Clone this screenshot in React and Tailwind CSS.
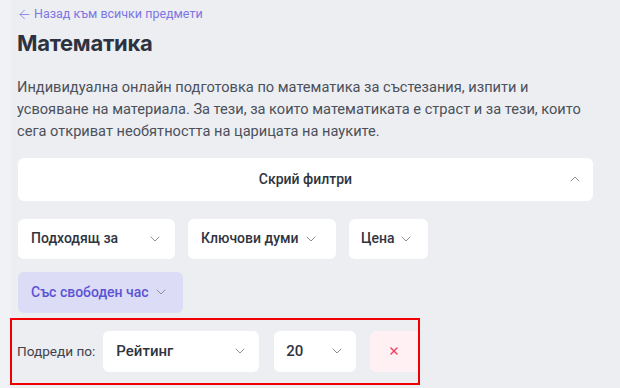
import { ChevronDown, ChevronUp, ArrowLeft, X } from 'lucide-react';

const FilterButton = ({ label, className = '' }) => (
  <button className={`flex items-center h-10 rounded-md bg-white text-[14px] font-medium text-[#2f3440] ${className}`}>
    {label}
  </button>
);

const App = () => {
  return (
    <div className="w-[620px] h-[388px] overflow-hidden flex bg-[#eceef2] font-['Roboto',sans-serif]">
      <div className="w-[11px] shrink-0 bg-[#f1f2f5]" />
      <div className="flex-1 pl-[6px] pr-[27px]">
        <a className="flex items-center gap-[2px] pt-[5px] text-[12.5px] text-[#7d76e3]">
          <ArrowLeft size={15} strokeWidth={1.3} />
          Назад към всички предмети
        </a>
        <h1 className="mt-[4px] text-[22px] leading-[30px] font-bold tracking-[-0.3px] text-[#2d3240] font-['Inter',sans-serif]">
          Математика
        </h1>

        <p className="mt-[18px] -mr-[10px] text-[14.6px] leading-[22px] text-[#4b505a]">
          Индивидуална онлайн подготовка по математика за състезания, изпити и усвояване на материала. За тези, за които математиката е страст и за тези, които сега откриват необятността на царицата на науките.
        </p>

        <div className="mt-[16px] ml-[1px] h-[43px] rounded-md bg-white flex items-center relative">
          <span className="flex-1 text-center text-[14px] font-medium text-[#2f3440]">Скрий филтри</span>
          <ChevronUp size={16} strokeWidth={1.5} className="absolute right-[10px] text-[#8a8f9a]" />
        </div>

        <div className="mt-[18px] ml-[1px] flex gap-[13px]">
          <FilterButton
            className="w-[157px] pl-[13px] pr-[12px] justify-between"
            label={<><span>Подходящ за</span><ChevronDown size={16} strokeWidth={1.5} className="text-[#8a8f9a]" /></>}
          />
          <FilterButton
            className="w-[148px] pl-[13px] gap-[4px]"
            label={<><span>Ключови думи</span><ChevronDown size={16} strokeWidth={1.5} className="text-[#8a8f9a]" /></>}
          />
          <FilterButton
            className="w-[79px] pl-[12px] gap-[4px]"
            label={<><span>Цена</span><ChevronDown size={16} strokeWidth={1.5} className="text-[#8a8f9a]" /></>}
          />
        </div>

        <button className="mt-[13px] ml-[1px] h-[41px] w-[165px] pl-[13px] flex items-center gap-[4px] rounded-md bg-[#dcdcf6] text-[14px] font-medium text-[#5a54d4]">
          <span>Със свободен час</span>
          <ChevronDown size={16} strokeWidth={1.5} className="text-[#8a8f9a]" />
        </button>

        <div className="mt-[5px] -ml-[7px] w-[410px] h-[67px] border-[2px] border-[#f00000] flex items-center pl-[5px] overflow-hidden">
          <span className="shrink-0 whitespace-nowrap text-[13.6px] text-[#3d424d] mr-[8px]">Подреди по:</span>
          <div className="shrink-0 h-[41px] w-[156px] rounded-md bg-white flex items-center justify-between pl-[13px] pr-[11px] text-[15px] font-medium text-[#2f3440]">
            <span>Рейтинг</span>
            <ChevronDown size={16} strokeWidth={1.5} className="text-[#8a8f9a]" />
          </div>
          <div className="shrink-0 ml-[15px] h-[41px] w-[82px] rounded-md bg-white flex items-center justify-between pl-[12px] pr-[11px] text-[15px] font-medium text-[#2f3440]">
            <span>20</span>
            <ChevronDown size={16} strokeWidth={1.5} className="text-[#8a8f9a]" />
          </div>
          <button className="ml-[14px] h-[41px] w-[48px] shrink-0 rounded-l-md bg-[#fff0f3] flex items-center pl-[18px] text-[#ef4466]">
            <X size={12} strokeWidth={3} />
          </button>
        </div>
      </div>
    </div>
  );
};

export default App;
